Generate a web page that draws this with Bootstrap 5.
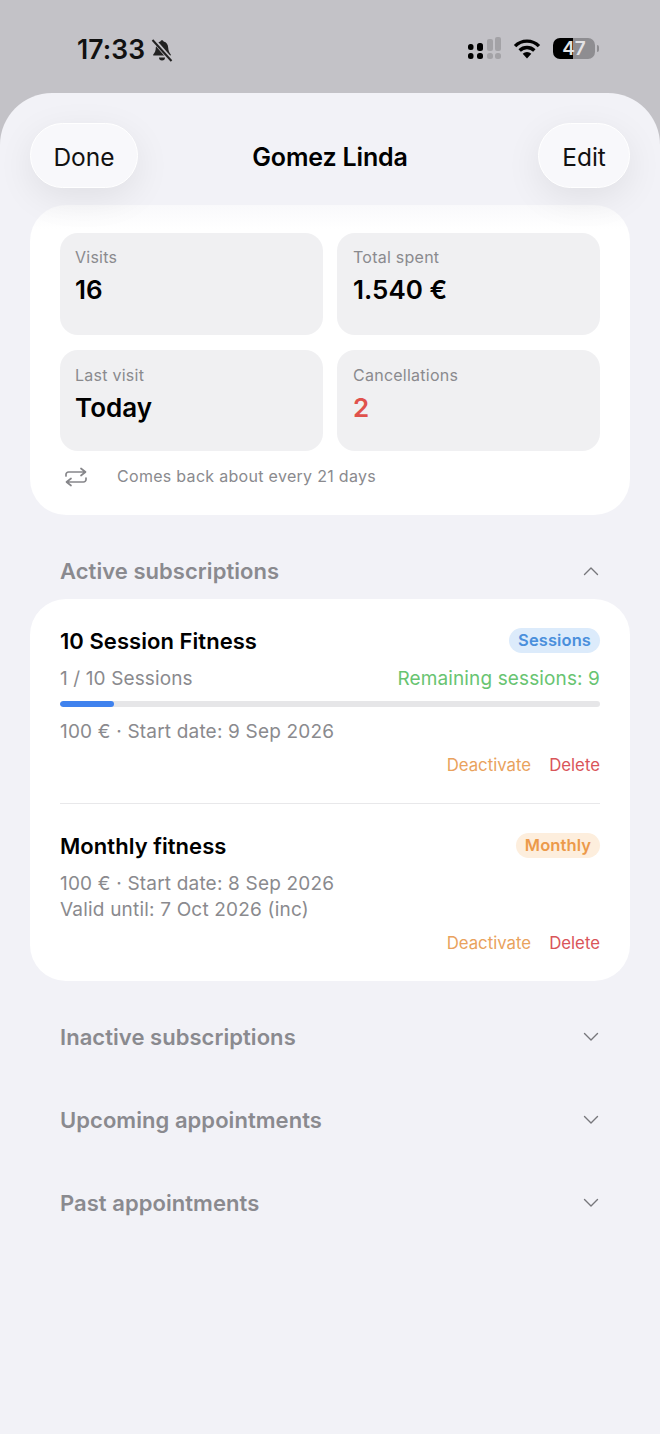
<!doctype html>
<html lang="en">
<head>
<meta charset="utf-8">
<title>Gomez Linda</title>
<link href="https://cdn.jsdelivr.net/npm/bootstrap@5.3.0/dist/css/bootstrap.min.css" rel="stylesheet">
<style>
html,body{height:100%;}
body{background:#c3c2c7;font-family:Inter,"Liberation Sans",sans-serif;color:#000;width:660px;height:1434px;overflow:hidden;}
.status-zone{height:93px;padding:33px 61px 0 77px;}
.clock{font-size:26.5px;font-weight:600;line-height:32px;letter-spacing:.1px;color:#111;}
.bell-icon{margin-left:1px;margin-top:1px;}
.status-icons{margin-top:4px;gap:12px;}
.batt-wrap{gap:2px;}
.batt{width:42px;height:21px;border-radius:7px;background:linear-gradient(90deg,#000 0 20px,#8e8d91 20px);color:#e4e4e6;font-size:19px;font-weight:600;line-height:21px;text-align:center;}
.batt-tip{width:2px;height:7px;background:#8e8d91;border-radius:0 2px 2px 0;}
.sheet{position:relative;height:1341px;background:#f2f2f7;border-radius:52px 52px 0 0;padding:30px 30px 0;overflow:hidden;}
.sheet-head{position:relative;z-index:2;height:65px;margin-bottom:17px;display:grid;grid-template-columns:1fr auto 1fr;align-items:center;}
.glass-btn{height:65px;border-radius:33px;background:#f8f8fb;border:1px solid #fff;font-size:24.5px;line-height:1;color:#111;box-shadow:0 10px 36px rgba(0,0,0,.08);padding:3px 0 0;}
.glass-btn:hover{background:#f8f8fb;color:#111;border-color:#fff;}
.btn-done{width:108px;justify-self:start;}
.btn-edit{width:92px;justify-self:end;}
.sheet-title{font-size:25px;font-weight:600;margin:2px 0 0;line-height:30px;letter-spacing:-.15px;}
.panel{background:#fff;border:0;border-radius:36px;}
.stats-panel{position:relative;height:310px;padding:28px 30px 0;background:linear-gradient(#f9f9fb,#fff 24px);}
.stats-grid{display:grid;grid-template-columns:263px 263px;column-gap:14px;row-gap:15px;}
.stat-tile{height:102px;background:#f0f0f2;border-radius:18px;padding:14px 15px 0;}
.stat-tile.short{height:101px;padding-top:15px;}
.stat-tile.right-tile{padding-left:16px;}
.stat-label{font-size:16px;line-height:20px;color:#8a8a8e;letter-spacing:.25px;}
.stat-value{font-size:26px;font-weight:600;line-height:34px;margin-top:6px;}
.stat-red{color:#e0524c;}
.repeat-line{height:25px;margin-top:13px;font-size:16px;line-height:25px;color:#8a8a8e;letter-spacing:.3px;}
.repeat-line svg{margin:0 30px 0 5px;}
.section-row{height:28px;padding:0 31px 0 30px;color:#8a8a8f;}
.section-title{font-size:22px;font-weight:600;line-height:28px;margin:0;letter-spacing:.05px;}
.first-row{margin-top:42px;margin-bottom:14px;}
.later-row{margin-top:55px;}
.after-panel{margin-top:42px;}
.subs-panel{height:382px;padding:28px 30px 0;}
.sub-name{font-size:22px;font-weight:600;line-height:28px;margin:0;letter-spacing:.05px;}
.pill{font-size:16.5px;font-weight:600;line-height:20px;padding:2px 9px 3px;border-radius:13px;letter-spacing:.1px;margin-bottom:2px;}
.pill-blue{background:#dcebfb;color:#4a8fdc;}
.pill-orange{background:#fdeedd;color:#ec9a4a;}
.muted-line{font-size:19px;line-height:26px;color:#8a8a8e;letter-spacing:.12px;}
.date-line{letter-spacing:.19px;}
.green-line{color:#68c471;}
.track{height:6px;border-radius:3px;background:#e6e6e8;margin-top:9px;overflow:hidden;}
.track .progress-bar{background:#3f82ee;border-radius:3px;}
.act-row{font-size:16.8px;line-height:20px;gap:18px;}
.act-orange{color:#e9a25d;}
.act-red{color:#d9555a;}
.sub-sep{height:1px;background:#e8e8ea;margin:28px 0 28px;}
.mt-line-a{margin-top:11px;}
.mt-line-b{margin-top:12px;}
.mt-act-a{margin-top:10px;}
</style>
</head>
<body>
<div class="status-zone d-flex justify-content-between align-items-start">
  <div class="d-flex align-items-center gap-1">
    <span class="clock">17:33</span>
    <svg class="bell-icon" width="24" height="24" viewBox="0 0 24 24" aria-hidden="true"><path d="M12 2.200c.9 0 1.500.6 1.600 1.400 3 .7 4.400 3.200 4.600 6.200.2 3 .9 5 2.600 6.700v1H3.200v-1C5 14.800 5.700 12.800 5.800 9.800c.2-3 1.600-5.500 4.600-6.200.1-.8.700-1.400 1.600-1.400z" fill="#222"/><path d="M9 19.500h6a3 3 0 0 1-6 0z" fill="#222"/><path d="M3 1.500l18.500 21" stroke="#c3c2c7" stroke-width="4.500"/><path d="M2.500 2l19 21" stroke="#222" stroke-width="2"/></svg>
  </div>
  <div class="status-icons d-flex align-items-center">
    <svg width="33" height="22" viewBox="0 0 33 22" aria-hidden="true"><rect x="0" y="7" width="5.500" height="6" rx="2.500" fill="#000"/><rect x="0" y="16" width="5.500" height="6" rx="2.500" fill="#000"/><rect x="9" y="6" width="6" height="8" rx="2.500" fill="#000"/><rect x="9" y="16" width="6" height="6" rx="2.500" fill="#000"/><rect x="19" y="2" width="6" height="12" rx="2" fill="#a3a2a6"/><rect x="19" y="16" width="6" height="6" rx="2.500" fill="#a3a2a6"/><rect x="27" y="0" width="6" height="14" rx="2" fill="#a3a2a6"/><rect x="27" y="16" width="6" height="6" rx="2.500" fill="#a3a2a6"/></svg>
    <svg width="28" height="21" viewBox="0 0 29 22" aria-hidden="true"><path d="M2 8.500a17.500 17.500 0 0 1 25 0M6.800 13a11 11 0 0 1 15.400 0" fill="none" stroke="#000" stroke-width="3.600" stroke-linecap="butt"/><path d="M10 16.500a6.500 6.500 0 0 1 9 0l-4.500 5z" fill="#000"/></svg>
    <div class="batt-wrap d-flex align-items-center"><div class="batt">47</div><div class="batt-tip"></div></div>
  </div>
</div>
<main class="sheet">
  <header class="sheet-head">
    <button type="button" class="btn glass-btn btn-done">Done</button>
    <h1 class="sheet-title">Gomez Linda</h1>
    <button type="button" class="btn glass-btn btn-edit">Edit</button>
  </header>
  <section class="card panel stats-panel">
    <div class="stats-grid">
      <div class="stat-tile"><div class="stat-label">Visits</div><div class="stat-value">16</div></div>
      <div class="stat-tile right-tile"><div class="stat-label">Total spent</div><div class="stat-value">1.540 €</div></div>
      <div class="stat-tile short"><div class="stat-label">Last visit</div><div class="stat-value">Today</div></div>
      <div class="stat-tile short right-tile"><div class="stat-label">Cancellations</div><div class="stat-value stat-red">2</div></div>
    </div>
    <div class="repeat-line d-flex align-items-center">
      <svg width="22" height="20" viewBox="0 0 22 20" fill="none" stroke="#86868a" stroke-width="1.700" stroke-linecap="round" stroke-linejoin="round" aria-hidden="true"><path d="M1 9V7.500A2.500 2.500 0 0 1 3.500 5H20M16 1.500 20.500 5 16 8.500"/><path d="M21 11v1.500a2.500 2.500 0 0 1-2.500 2.500H2M6 11.500 1.500 15 6 18.500"/></svg>
      <span>Comes back about every 21 days</span>
    </div>
  </section>
  <div class="section-row first-row d-flex justify-content-between align-items-center">
    <h2 class="section-title">Active subscriptions</h2>
    <svg width="16" height="10" viewBox="0 0 16 10" fill="none" stroke="#77777b" stroke-width="1.400" stroke-linecap="round" stroke-linejoin="round" aria-hidden="true"><path d="M1.500 8.500 8 2l6.500 6.500"/></svg>
  </div>
  <section class="card panel subs-panel">
    <div class="d-flex justify-content-between align-items-center">
      <h3 class="sub-name">10 Session Fitness</h3>
      <span class="pill pill-blue">Sessions</span>
    </div>
    <div class="d-flex justify-content-between muted-line mt-line-a">
      <span>1 / 10 Sessions</span><span class="green-line">Remaining sessions: 9</span>
    </div>
    <div class="progress track" role="progressbar" aria-valuenow="10" aria-valuemin="0" aria-valuemax="100">
      <div class="progress-bar" style="width:10%"></div>
    </div>
    <div class="muted-line date-line mt-line-b">100 € · Start date: 9 Sep 2026</div>
    <div class="act-row d-flex justify-content-end mt-act-a">
      <span class="act-orange">Deactivate</span><span class="act-red">Delete</span>
    </div>
    <div class="sub-sep"></div>
    <div class="d-flex justify-content-between align-items-center">
      <h3 class="sub-name">Monthly fitness</h3>
      <span class="pill pill-orange">Monthly</span>
    </div>
    <div class="muted-line date-line mt-line-a">100 € · Start date: 8 Sep 2026</div>
    <div class="muted-line date-line">Valid until: 7 Oct 2026 (inc)</div>
    <div class="act-row d-flex justify-content-end mt-act-a">
      <span class="act-orange">Deactivate</span><span class="act-red">Delete</span>
    </div>
  </section>
  <div class="section-row after-panel d-flex justify-content-between align-items-center">
    <h2 class="section-title">Inactive subscriptions</h2>
    <svg width="16" height="10" viewBox="0 0 16 10" fill="none" stroke="#77777b" stroke-width="1.400" stroke-linecap="round" stroke-linejoin="round" aria-hidden="true"><path d="M1.500 1.500 8 8l6.500-6.500"/></svg>
  </div>
  <div class="section-row later-row d-flex justify-content-between align-items-center">
    <h2 class="section-title">Upcoming appointments</h2>
    <svg width="16" height="10" viewBox="0 0 16 10" fill="none" stroke="#77777b" stroke-width="1.400" stroke-linecap="round" stroke-linejoin="round" aria-hidden="true"><path d="M1.500 1.500 8 8l6.500-6.500"/></svg>
  </div>
  <div class="section-row later-row d-flex justify-content-between align-items-center">
    <h2 class="section-title">Past appointments</h2>
    <svg width="16" height="10" viewBox="0 0 16 10" fill="none" stroke="#77777b" stroke-width="1.400" stroke-linecap="round" stroke-linejoin="round" aria-hidden="true"><path d="M1.500 1.500 8 8l6.500-6.500"/></svg>
  </div>
</main>
<script src="https://cdn.jsdelivr.net/npm/bootstrap@5.3.0/dist/js/bootstrap.bundle.min.js"></script>
</body>
</html>
